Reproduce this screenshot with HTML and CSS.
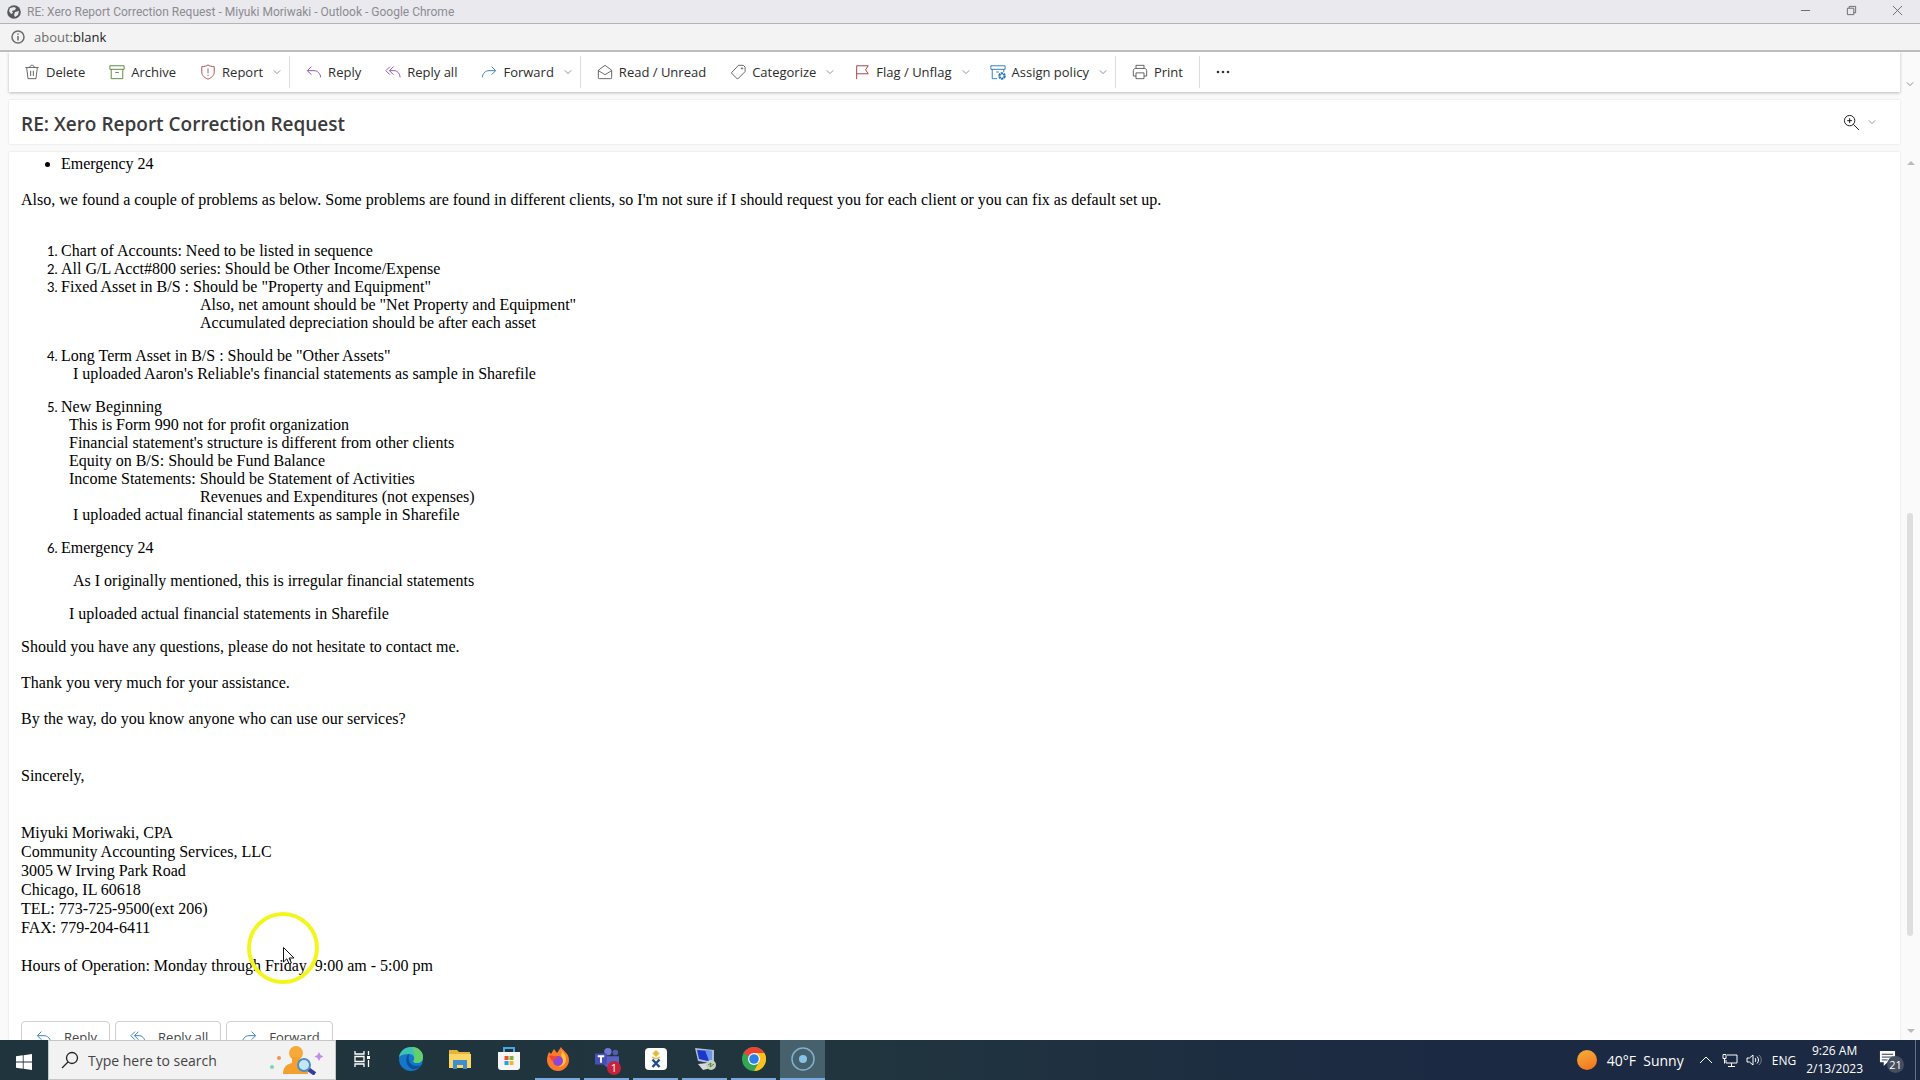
FILE: index.html
```html
<!DOCTYPE html>
<html lang="en">
<head>
    <meta charset="UTF-8">
    <meta name="viewport" content="width=device-width, initial-scale=1.0">
    <title>RE: Xero Report Correction Request</title>
    <link rel="stylesheet" href="styles.css">
</head>
<body>
    <!-- shapes used more than once -->
    <svg class="defs" aria-hidden="true">
        <symbol id="chev" viewBox="0 0 10 10"><path d="M1 3l4 4 4-4"/></symbol>
        <symbol id="reply" viewBox="0 0 18 18"><path d="M6 3L1.500 7.500 6 12M2 7.500h7c4 0 7 3 7.500 7.500"/></symbol>
        <symbol id="replyall" viewBox="0 0 18 18"><path d="M5.500 3L1 7.500 5.500 12M9.500 3L5 7.500 9.500 12M5.500 7.500H10c4 0 6.500 3 7 7.500"/></symbol>
        <symbol id="forward" viewBox="0 0 18 18"><path d="M12 3l4.500 4.500L12 12M16 7.500H9c-4 0-7 3-7.500 7.500"/></symbol>
    </svg>

    <header class="titlebar">
        <svg class="globe" viewBox="0 0 14 14"><circle cx="7" cy="7" r="6.800" fill="#55585c"/><path d="M3 3l4-1 2 1-1 2-3 1 1 2-2 1-2-3zM8 7l4-1-1 4-3 2-1-2z" fill="#e9e9ee"/></svg>
        <span class="title">RE: Xero Report Correction Request - Miyuki Moriwaki - Outlook - Google Chrome</span>
        <div class="win_btns">
            <button aria-label="Minimize"><svg viewBox="0 0 12 12"><path d="M1 6h10"/></svg></button>
            <button aria-label="Restore"><svg viewBox="0 0 12 12"><path d="M1.500 3.500h7v7h-7zM3.500 3.500v-2h7v7h-2"/></svg></button>
            <button aria-label="Close"><svg viewBox="0 0 12 12"><path d="M1 1l10 10M11 1L1 11"/></svg></button>
        </div>
    </header>
    <div class="urlbar">
        <svg viewBox="0 0 14 14"><circle cx="7" cy="7" r="6"/><path d="M7 6v4.500M7 3.500v1.300"/></svg>
        <span>about:<b>blank</b></span>
    </div>

    <div class="window">
        <nav class="toolbar">
            <button><svg class="ico" viewBox="0 0 18 18"><path d="M1.500 4h15M6.500 4c0-3.500 5-3.500 5 0M3 4l1.500 12.500h9L15 4M7.500 7.500v6M10.500 7.500v6"/></svg>Delete</button>
            <button><svg class="ico green" viewBox="0 0 18 18"><path d="M1 2h16v4H1zM2.500 6v10.500h13V6M7 9.500h4"/></svg>Archive</button>
            <button><svg class="ico red" viewBox="0 0 18 18"><path d="M9 1c2 1.500 4.500 2 7 2v6c0 4-3 6.500-7 8-4-1.500-7-4-7-8V3c2.500 0 5-.500 7-2zM9 5v5.500M9 12v1.300"/></svg>Report<svg class="chev"><use href="#chev"/></svg></button>
            <span class="sep"></span>
            <button><svg class="ico purple"><use href="#reply"/></svg>Reply</button>
            <button><svg class="ico purple"><use href="#replyall"/></svg>Reply all</button>
            <button><svg class="ico blue"><use href="#forward"/></svg>Forward<svg class="chev"><use href="#chev"/></svg></button>
            <span class="sep"></span>
            <button><svg class="ico" viewBox="0 0 18 18"><path d="M1.500 7L9 1.500 16.500 7v8.500c0 1-.500 1-1 1h-13c-1 0-1-.500-1-1zM1.500 7.500L9 12l7.500-4.500"/></svg>Read / Unread</button>
            <button><svg class="ico" viewBox="0 0 18 18"><path d="M9.500 1.500h5.500l2 2v5L8.500 17 1.500 10z"/><circle cx="13.500" cy="5" r=".8"/></svg>Categorize<svg class="chev"><use href="#chev"/></svg></button>
            <button><svg class="ico maroon" viewBox="0 0 18 18"><path d="M3 17V2h13l-3 4.500 3 4.500H3"/></svg>Flag / Unflag<svg class="chev"><use href="#chev"/></svg></button>
            <button><svg class="ico blue" viewBox="0 0 18 18"><path d="M1 2h16v4H1zM2.500 6v10.500H8M15.500 6v3M7 9h3"/><circle cx="13.500" cy="13.500" r="3" stroke-width="2.500" stroke-dasharray="2.500 .6"/></svg>Assign policy<svg class="chev"><use href="#chev"/></svg></button>
            <span class="sep"></span>
            <button class="last"><svg class="ico" viewBox="0 0 18 18"><path d="M4.500 5V1.500h9V5M4.500 13.500h-3v-6c0-1.500 1-2.500 2.500-2.500h10c1.500 0 2.500 1 2.500 2.500v6h-3M4.500 10h9v6.500h-9z"/></svg>Print</button>
            <span class="sep"></span>
            <button aria-label="More options"><svg class="dots" viewBox="0 0 14 14"><circle cx="2" cy="7" r="1.300"/><circle cx="7" cy="7" r="1.300"/><circle cx="12" cy="7" r="1.300"/></svg></button>
        </nav>
        <div class="gutter"><svg class="chev"><use href="#chev"/></svg></div>

        <div class="subject">
            <h1>RE: Xero Report Correction Request</h1>
            <button aria-label="Zoom"><svg class="mag" viewBox="0 0 18 18"><circle cx="7" cy="7" r="5.500"/><path d="M11 11l6 6M4.500 7h5M7 4.500v5"/></svg><svg class="chev"><use href="#chev"/></svg></button>
        </div>

        <main class="message">
            <ul>
                <li>Emergency 24</li>
            </ul>
            <p class="intro">Also, we found a couple of problems as below. Some problems are found in different clients, so I'm not sure if I should request you for each client or you can fix as default set up.</p>
            <ol>
                <li>Chart of Accounts: Need to be listed in sequence</li>
                <li>All G/L Acct#800 series: Should be Other Income/Expense</li>
                <li class="gap">Fixed Asset in B/S : Should be "Property and Equipment"
                    <div class="deep">Also, net amount should be "Net Property and Equipment"</div>
                    <div class="deep">Accumulated depreciation should be after each asset</div>
                </li>
                <li class="gap">Long Term Asset in B/S : Should be "Other Assets"
                    <div class="in3">I uploaded Aaron's Reliable's financial statements as sample in Sharefile</div>
                </li>
                <li class="gap">New Beginning
                    <div class="in2">This is Form 990 not for profit organization</div>
                    <div class="in2">Financial statement's structure is different from other clients</div>
                    <div class="in2">Equity on B/S: Should be Fund Balance</div>
                    <div class="in2">Income Statements: Should be Statement of Activities</div>
                    <div class="deep">Revenues and Expenditures (not expenses)</div>
                    <div class="in3">I uploaded actual financial statements as sample in Sharefile</div>
                </li>
                <li class="gap">Emergency 24
                    <p class="in3">As I originally mentioned, this is irregular financial statements</p>
                    <p class="in2">I uploaded actual financial statements in Sharefile</p>
                </li>
            </ol>
            <div class="closing">
                <p>Should you have any questions, please do not hesitate to contact me.</p>
                <p>Thank you very much for your assistance.</p>
                <p>By the way, do you know anyone who can use our services?</p>
            </div>
            <p class="sign">Sincerely,</p>
            <address>
                Miyuki Moriwaki, CPA<br>
                Community Accounting Services, LLC<br>
                3005 W Irving Park Road<br>
                Chicago, IL 60618<br>
                TEL: 773-725-9500(ext 206)<br>
                FAX: 779-204-6411<br>
                <br>
                Hours of Operation: Monday through Friday &nbsp;9:00 am - 5:00 pm
            </address>
            <div class="actions">
                <button><svg class="ico blue"><use href="#reply"/></svg>Reply</button>
                <button><svg class="ico blue"><use href="#replyall"/></svg>Reply all</button>
                <button><svg class="ico blue"><use href="#forward"/></svg>Forward</button>
            </div>
        </main>
        <div class="scroll">
            <svg viewBox="0 0 8 6"><path d="M0 5l4-4 4 4z"/></svg>
            <div class="track"><div class="thumb"></div></div>
            <svg viewBox="0 0 8 6"><path d="M0 1l4 4 4-4z"/></svg>
        </div>
    </div>

    <footer class="taskbar">
        <button class="start" aria-label="Start"><svg viewBox="0 0 16 16"><path d="M0 2.300L6.800 1.300v6.300H0zM7.600 1.200L16 0v7.600H7.600zM0 8.400h6.800v6.300L0 13.700zM7.600 8.400H16V16l-8.400-1.200z" fill="#fff"/></svg></button>
        <div class="search">
            <svg class="lens" viewBox="0 0 18 18"><circle cx="11" cy="7" r="5.500"/><path d="M7 11l-6 6"/></svg>
            <input type="text" placeholder="Type here to search" aria-label="Search">
            <svg class="person" viewBox="0 0 54 30">
                <circle cx="3" cy="22" r="2" fill="#7fd0c4"/><circle cx="10" cy="13" r="2" fill="#f0944d"/>
                <path d="M50 7l1.500 3 3 1.500-3 1.500-1.500 3-1.500-3-3-1.500 3-1.500z" fill="#c58be8"/>
                <circle cx="27" cy="8" r="7" fill="#f6a93b"/><path d="M23 12h8l1 6c5 2 7 5 7 11H14c0-7 4-10 9-11z" fill="#f3a02f"/>
                <path d="M39 24l7 5" stroke="#3b3a9c" stroke-width="4"/><circle cx="35" cy="20" r="6" fill="#c4e6f8" stroke="#4b8fc4" stroke-width="2"/>
            </svg>
        </div>
        <div class="apps">
            <button aria-label="Task view"><svg viewBox="0 0 24 24"><path d="M5 4v3h9V4M5 20v-3h9v3M5 9.500h9v5H5zM18.500 4v4M18.500 13v7" stroke="#fff" stroke-width="1.300"/><path d="M17 9h3v3h-3z" fill="#fff"/></svg></button>
            <button aria-label="Edge"><svg viewBox="0 0 24 24"><circle cx="12" cy="12" r="12" fill="#1477c9"/><path d="M0 10C1 4 6 0 12 0c7 0 12 5 12 10 0 4-3 6-6 6-4 0-4-2-3-3 1-3-1-6-5-6-5 0-8 1-10 3z" fill="#3dc3b0"/><path d="M13 0c7 0 11 5 11 10 0 4-3 6-6 6-4 0-4-2-3-3 2-5 0-9-2-13z" fill="#63d06a"/><path d="M10 7c-4 2-4 12 3 15 4 1 7-1 9-4-7 3-14-1-12-11z" fill="#0c4fa0"/></svg></button>
            <button aria-label="File Explorer"><svg viewBox="0 0 24 24"><path d="M1 3h8l2 2h11v16H1z" fill="#e9b23c"/><path d="M1 7h22v14H1z" fill="#fbd667"/><path d="M5 13h14v9h-4v-4H9v4H5z" fill="#3f8fd0"/></svg></button>
            <button aria-label="Store"><svg viewBox="0 0 24 24"><path d="M7 5V1h10v4" fill="none" stroke="#4aa8de" stroke-width="2"/><path d="M1 5h22v15c0 2-1 3-3 3H4c-2 0-3-1-3-3z" fill="#f5f5f5"/><path d="M7.500 9h4v4h-4z" fill="#e8502f"/><path d="M12.500 9h4v4h-4z" fill="#7ab53a"/><path d="M7.500 14h4v4h-4z" fill="#2f9be0"/><path d="M12.500 14h4v4h-4z" fill="#f3b52d"/></svg></button>
            <button class="open" aria-label="Firefox"><svg viewBox="0 0 24 24"><path d="M3 5l2 2 3-5 3 4 4-6c2 4 8 6 8 13 0 6-5 11-11 11S1 19 1 13c0-3 1-6 2-8z" fill="#fd7a2b"/><path d="M15 0c0 5 5 6 5 12s-5 8-8 8c4-1 6-7 3-12 2-3 0-5 0-8z" fill="#fdc53a"/><circle cx="12" cy="14" r="5" fill="#8b47d8"/><path d="M3 9c3-1 7 0 9 2-3 0-3 3-6 3z" fill="#f0433a"/></svg></button>
            <button class="open" aria-label="Teams"><svg viewBox="0 0 26 24"><circle cx="14" cy="4" r="4" fill="#7078d8"/><circle cx="22" cy="5" r="3" fill="#545cb8"/><path d="M8 9h18v7c0 4-4 6-7 6-5 0-9-2-10-6z" fill="#5a62c3"/><path d="M0 6h13v12H0z" fill="#4650b4"/><path d="M3 9h7M6.500 9v7" stroke="#fff" stroke-width="2"/></svg><span class="badge">1</span></button>
            <button class="open" aria-label="Xero"><svg viewBox="0 0 24 24"><rect x="1" y="1" width="22" height="22" rx="4" fill="#fff"/><path d="M12 3.500l3 3-3 3-3-3z" fill="#edb62f" stroke="#edb62f"/><path d="M8 10c2 2 6 2 8 0" stroke="#edb62f" stroke-width="1.500"/><path d="M8.500 20l7-7.500M8.500 12.500l7 7.500" stroke="#1c4f8c" stroke-width="2.500"/></svg></button>
            <button class="open" aria-label="Remote Desktop"><svg viewBox="0 0 24 24"><path d="M2 1l19 2v14L5 14z" fill="#aebfd2"/><path d="M4 3l15 1v11L6 12z" fill="#1d38c8"/><path d="M12 3l7 1v11l-3-1z" fill="#6a95ee"/><path d="M5 17l9-1 4 5-8 2z" fill="#d7dbe0"/><circle cx="18" cy="18" r="5" fill="#c5d3bd"/><path d="M15 18l3-2-1 4 4-3" fill="none" stroke="#4c7c49"/></svg></button>
            <button class="open" aria-label="Chrome"><svg viewBox="0 0 24 24"><circle cx="12" cy="12" r="12" fill="#34a552"/><path d="M12 12L1.600 6a12 12 0 0 1 20.800 0z" fill="#e94436"/><path d="M12 6h10.400A12 12 0 0 1 12 24l5-9z" fill="#fbc11c"/><circle cx="12" cy="12" r="6" fill="#fff"/><circle cx="12" cy="12" r="4.800" fill="#2f7de8"/></svg></button>
            <button class="open active" aria-label="Recorder"><svg viewBox="0 0 24 24"><circle cx="12" cy="12" r="11" fill="none" stroke="#7fb2d0" stroke-width="1.500"/><circle cx="12" cy="12" r="4" fill="#86c3e8"/></svg></button>
        </div>
        <div class="tray">
            <span class="sun"></span>
            <span class="weather">40°F&nbsp; Sunny</span>
            <svg class="t_ico" viewBox="0 0 16 16"><path d="M2 11l6-6 6 6"/></svg>
            <svg class="t_ico" viewBox="0 0 16 16"><path d="M5 3h10v8H4V8M9.500 11v3M6 14.500h7M1 2.500h3v4H1zM2.500 6.500v5"/></svg>
            <svg class="t_ico" viewBox="0 0 16 16"><path d="M1 6h2.500L7 3v10L3.500 10H1zM9 6c1 1 1 3 0 4M11 4.500c2 2 2 5 0 7"/><path d="M13 3c3 3 3 7 0 10" opacity=".4"/></svg>
            <span class="lang">ENG</span>
            <span class="clock">9:26 AM<br>2/13/2023</span>
            <button class="notes" aria-label="Notifications"><svg viewBox="0 0 18 18"><path d="M1 1h16v12H9l-4 4v-4H1z" fill="#fff"/><path d="M3 4.500h12M3 7.500h12M3 10.500h6" stroke="#1c2a42"/></svg><span class="count">21</span></button>
        </div>
    </footer>

    <!-- mouse highlight -->
    <div class="pointer">
        <svg viewBox="0 0 12 18"><path d="M.5.500v14.500l3.300-3.200 2.400 5.200 2.200-1-2.300-5h4.900z" fill="#fff" stroke="#111"/></svg>
    </div>
</body>
</html>
```
FILE: styles.css
```css
*{margin:0; padding:0; box-sizing: border-box;}
body{
    height:100vh;
    display:flex;
    flex-direction: column;
    overflow:hidden;
    background-color: #fafafa;
    color:#111;
    font-family: "Open Sans", "Noto Sans", sans-serif;
    font-size: 14px;
}
button{
    border:none;
    background:none;
    font:inherit;
    color:inherit;
}
svg{flex:none; fill:none; stroke:currentColor;}
.defs{position:absolute; width:0; height:0;}

/* browser frame */
.titlebar{
    display:flex;
    align-items: center;
    height:24px;
    padding-left: 7px;
    background-color: #e9e9ee;
    border-bottom: 1px solid #b4b4b8;
    color:#8c8c90;
    font-family: Roboto, sans-serif;
    font-size: 12px;
}
.globe{width:14px; height:14px; stroke:none; margin-right: 6px;}
.win_btns{
    display:flex;
    margin-left: auto;
    color:#66666a;
}
.win_btns button{width:46px; height:20px;}
.win_btns svg{width:11px; height:11px;}
.urlbar{
    display:flex;
    align-items: center;
    gap:9px;
    height:28px;
    padding-left: 11px;
    background-color: #f3f3f4;
    border-bottom: 2px solid #bdbdbf;
    color:#6c6c6c;
    font-size: 13px;
}
.urlbar svg{width:14px; height:14px; stroke-width:1.5;}
.urlbar b{font-weight: normal; color:#222;}

/* outlook */
.window{
    flex:1;
    min-height: 0;
    display:grid;
    grid-template-columns: 1fr 20px;
    grid-template-rows: auto auto 1fr;
    row-gap:8px;
    padding-left: 9px;
}
.toolbar{
    display:flex;
    align-items: center;
    height:40px;
    padding-left: 3px;
    background-color: #fff;
    box-shadow: 0 1px 3px #bbb;
    clip-path: inset(0 -4px -5px -4px);
    color:#2c2c2c;
    font-size: 13px;
}
.toolbar button{
    display:flex;
    align-items: center;
    gap:6px;
    padding:0 12px;
}
.toolbar button:has(.chev){padding-right: 8px;}
.toolbar .last{padding-right: 16px;}
.toolbar .sep{
    width:1px;
    height:32px;
    margin-right: 4px;
    background-color: #dcdcdc;
}
.ico{width:16px; height:16px; color:#555;}
.green{color:#4f7d2c;}
.red{color:#a5433b;}
.purple{color:#8b3fa0;}
.blue{color:#2371b8;}
.maroon{color:#9c2f3c;}
.chev{width:8px; height:8px; color:#777; margin-left: 4px;}
.dots{width:14px; height:14px; fill:#333; stroke:none;}
.gutter{
    display:flex;
    align-items: flex-end;
    padding:0 0 4px 2px;
}
.subject{
    grid-column: 1;
    display:flex;
    align-items: center;
    justify-content: space-between;
    height:44px;
    padding:0 24px 0 12px;
    background-color: #fff;
    box-shadow: 0 0 2px #ddd;
}
.subject h1{
    padding-top: 4px;
    font-size: 19px;
    font-weight: 600;
    color:#3c3c3c;
}
.subject button{display:flex; align-items: center; gap:4px;}
.mag{width:17px; height:17px;}
.message{
    grid-column: 1;
    overflow:hidden;
    padding:3px 12px 0;
    background-color: #fff;
    box-shadow: 0 0 2px #ddd;
    font-family: "Liberation Serif", serif;
    font-size: 16px;
    line-height: 18px;
    color:#000;
}
.message ul, .message ol{padding-left: 40px;}
.message ol li::marker{font-family: Lato, sans-serif; font-size: 13px;}
.intro{margin:18px 0 33px;}
.gap{margin-bottom: 15px;}
.gap p{margin-top: 15px;}
.in2{padding-left: 8px;}
.in3{padding-left: 12px;}
.deep{padding-left: 139px;}
.closing p{margin-bottom: 18px;}
.sign{margin:39px 0 38px;}
address{font-style: normal; line-height: 19px;}
.actions{
    display:flex;
    gap:5px;
    margin-top: 46px;
    font-family: "Open Sans", "Noto Sans", sans-serif;
    font-size: 13px;
    color:#444;
}
.actions button{
    display:flex;
    align-items: center;
    gap:12px;
    height:32px;
    padding:0 12px 0 14px;
    border:1px solid #d0d0d0;
    border-radius: 4px;
}
.scroll{
    display:flex;
    flex-direction: column;
    align-items: center;
    padding:8px 0 6px;
}
.scroll svg{width:8px; height:6px; fill:#bbb; stroke:none; margin-left: 2px;}
.track{
    flex:1;
    display:flex;
    flex-direction: column;
    justify-content: flex-end;
    width:6px;
    padding-bottom: 92px;
}
.thumb{height:55%; border-radius: 3px; background-color: #dedede;}

/* windows taskbar */
.taskbar{
    display:flex;
    height:40px;
    background:linear-gradient(90deg, #20343e 0%, #21353f 45%, #1b2942 75%);
    color:#fff;
}
.start{width:48px;}
.start svg{width:16px; height:16px; stroke:none; vertical-align: middle;}
.search{
    display:flex;
    align-items: center;
    width:288px;
    padding:0 12px;
    background-color: #f2f2f2;
    border:1px solid #c6c6c6;
    color:#222;
}
.lens{width:18px; height:18px; stroke-width:1.300;}
.search input{
    flex:1;
    min-width: 0;
    margin-left: 9px;
    border:none;
    background:none;
    font:inherit;
}
.search input::placeholder{color:#444; opacity:1;}
.person{width:54px; height:30px; stroke:none;}
.apps{display:flex; padding-left: 1px;}
.apps button{
    position:relative;
    width:45px;
    margin:0 2px;
    border-bottom: 2px solid transparent;
}
.apps svg{width:24px; height:24px; stroke:none; vertical-align: middle;}
.apps .open{border-bottom-color: #7aa9e0;}
.apps .active{background-color: #46606c;}
.badge{
    position:absolute;
    right:8px;
    bottom:3px;
    width:14px;
    height:14px;
    border-radius: 50%;
    background-color: #c4233b;
    font-size: 11px;
    line-height: 14px;
}
.tray{
    display:flex;
    align-items: center;
    margin-left: auto;
    padding-right: 4px;
    border-right: 1px solid #66708a;
    margin-right: 4px;
}
.sun{
    width:20px;
    height:20px;
    border-radius: 50%;
    background:linear-gradient(160deg, #f5b03a, #f2701f)
}
.weather{margin:0 14px 0 10px;}
.t_ico{width:16px; height:16px; margin-right: 8px;}
.lang{margin-left: 2px; font-size: 12px;}
.clock{
    margin:0 16px 0 10px;
    text-align: center;
    font-size: 12px;
    line-height: 18px;
}
.notes{position:relative; width:32px; text-align: left;}
.notes svg{width:17px; height:17px; stroke:none;}
.count{
    position:absolute;
    left:8px;
    top:6px;
    width:17px;
    height:17px;
    border-radius: 50%;
    background-color: #454f60;
    font-size: 11px;
    line-height: 17px;
    text-align: center;
}

.pointer{
    position:absolute;
    left:247px;
    top:912px;
    width:72px;
    height:72px;
    border:4px solid #f5f51e;
    border-radius: 50%;
}
.pointer svg{
    position:absolute;
    left:32px;
    top:31px;
    width:12px;
    height:18px;
}
```
